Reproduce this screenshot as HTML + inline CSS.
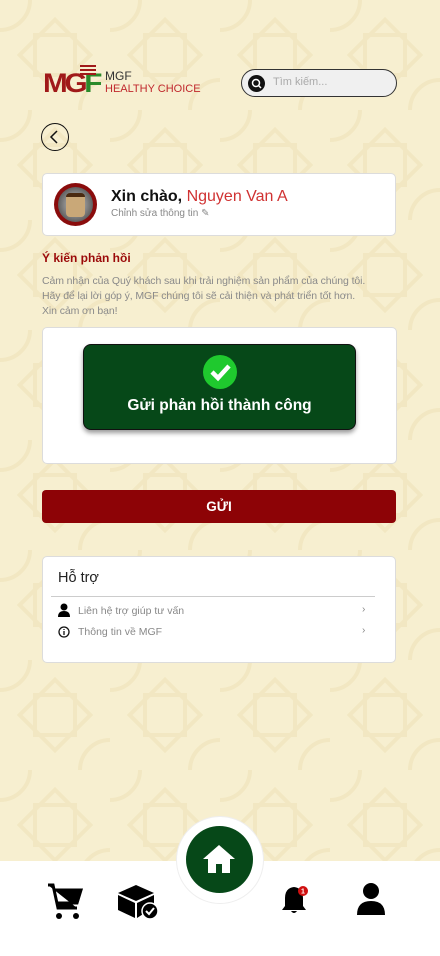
<!DOCTYPE html>
<html><head><meta charset="utf-8"><style>
*{margin:0;padding:0;box-sizing:border-box}
body{width:440px;height:956px;position:relative;overflow:hidden;font-family:"Liberation Sans","Noto Sans CJK SC",sans-serif;background:#f7efd0}
.a{position:absolute}
.card{position:absolute;background:#fff;border:1px solid #dcdcdc;border-radius:5px}
</style></head><body>
<svg class="a" style="left:0;top:0" width="440" height="861"><defs><pattern id="p" width="110" height="110" patternUnits="userSpaceOnUse"><g fill="none" stroke="#f2e7c2" stroke-width="4"><rect x="30" y="30" width="50" height="50" transform="rotate(45 55 55)"/><rect x="35" y="35" width="40" height="40"/><circle cx="0" cy="0" r="30"/><circle cx="110" cy="110" r="30"/></g></pattern></defs><rect width="440" height="861" fill="url(#p)"/></svg>

<!-- logo -->
<div class="a" style="left:43px;top:70px;font-weight:bold;font-size:27px;color:#a01919;letter-spacing:-3px;line-height:27px;transform:scaleX(1.1);transform-origin:left">MG<span style="color:#2a8a2a">F</span></div>
<div class="a" style="left:80px;top:65px;width:16px;height:2px;background:#a01919;box-shadow:0 4px 0 #a01919,0 8px 0 #a01919"></div>
<div class="a" style="left:105px;top:69px;font-size:12px;color:#333">MGF</div>
<div class="a" style="left:105px;top:83px;font-size:11px;color:#c0282d">HEALTHY CHOICE</div>

<!-- search -->
<div class="a" style="left:241px;top:69px;width:156px;height:28px;border:1.5px solid #333;border-radius:14px;background:#f0f0f0"></div>
<div class="a" style="left:248px;top:75px;width:17px;height:17px;border-radius:50%;background:#111"></div>
<svg class="a" style="left:250px;top:77px" width="13" height="13"><circle cx="6" cy="6" r="3.5" fill="none" stroke="#fff" stroke-width="1.5"/><path d="M8.5 8.5L11 11" stroke="#fff" stroke-width="1.5"/></svg>
<div class="a" style="left:273px;top:76px;font-size:11px;color:#aaa">Tìm kiếm...</div>

<!-- back -->
<div class="a" style="left:41px;top:123px;width:28px;height:28px;border:1.5px solid #111;border-radius:50%"></div>
<svg class="a" style="left:41px;top:123px" width="28" height="28"><path d="M16 8L10 14L16 20" fill="none" stroke="#111" stroke-width="1.5"/></svg>

<!-- profile -->
<div class="card" style="left:42px;top:173px;width:354px;height:63px"></div>
<div class="a" style="left:54px;top:183px;width:43px;height:43px;border-radius:50%;background:#8a0c0c"></div>
<div class="a" style="left:58px;top:187px;width:35px;height:35px;border-radius:50%;background:radial-gradient(#ccc,#333)"></div>
<div class="a" style="left:66px;top:193px;width:19px;height:24px;border-radius:4px;background:#c9a878;border-top:4px solid #4a2a10"></div>
<div class="a" style="left:111px;top:188px;font-size:16px;color:#111"><b>Xin chào,</b> <span style="color:#d03232">Nguyen Van A</span></div>
<div class="a" style="left:111px;top:208px;font-size:10px;color:#888">Chỉnh sửa thông tin ✎</div>

<div class="a" style="left:42px;top:251px;font-size:12px;font-weight:bold;color:#9b0a0a">Ý kiến phản hồi</div>
<div class="a" style="left:42px;top:274px;font-size:10.5px;color:#8a8a8a;line-height:15px;white-space:nowrap;letter-spacing:-0.1px">Cảm nhận của Quý khách sau khi trải nghiệm sản phẩm của chúng tôi.<br>Hãy để lại lời góp ý, MGF chúng tôi sẽ cải thiện và phát triển tốt hơn.<br>Xin cảm ơn bạn!</div>

<div class="card" style="left:42px;top:327px;width:355px;height:137px"></div>
<div class="a" style="left:83px;top:344px;width:273px;height:86px;background:#064818;border:1px solid #111;border-radius:8px;box-shadow:0 3px 5px rgba(0,0,0,.4)"></div>
<div class="a" style="left:203px;top:355px;width:34px;height:34px;border-radius:50%;background:#1fc92e"></div>
<svg class="a" style="left:203px;top:355px" width="34" height="34"><path d="M9 17L15 23L26 11" fill="none" stroke="#fff" stroke-width="4.5"/></svg>
<div class="a" style="left:83px;top:397px;width:273px;text-align:center;font-size:15.5px;font-weight:bold;color:#fff">Gửi phản hồi thành công</div>

<div class="a" style="left:42px;top:490px;width:354px;height:33px;background:#8d0306;border-radius:4px;color:#fff;font-weight:bold;font-size:13.5px;text-align:center;line-height:33px">GỬI</div>

<div class="card" style="left:42px;top:556px;width:354px;height:107px"></div>
<div class="a" style="left:58px;top:570px;font-size:14.5px;color:#222">Hỗ trợ</div>
<div class="a" style="left:51px;top:596px;width:324px;height:1px;background:#ccc"></div>
<svg class="a" style="left:58px;top:603px" width="12" height="14"><circle cx="6" cy="4" r="3.5"/><path d="M0 14Q0 8 6 8Q12 8 12 14Z"/></svg>
<div class="a" style="left:78px;top:605px;font-size:10.5px;color:#888">Liên hệ trợ giúp tư vấn</div>
<div class="a" style="left:362px;top:604px;font-size:10px;color:#888">›</div>
<svg class="a" style="left:58px;top:626px" width="12" height="12"><circle cx="6" cy="6" r="5" fill="none" stroke="#111" stroke-width="1.3"/><path d="M6 5V9M6 3V4" stroke="#111" stroke-width="1.3"/></svg>
<div class="a" style="left:78px;top:626px;font-size:10.5px;color:#888">Thông tin về MGF</div>
<div class="a" style="left:362px;top:625px;font-size:10px;color:#888">›</div>

<!-- bottom nav -->
<div class="a" style="left:0;top:861px;width:440px;height:95px;background:#fff"></div>
<div class="a" style="left:176px;top:816px;width:88px;height:88px;border-radius:50%;background:#fff;border:1px solid #eee"></div>
<div class="a" style="left:186px;top:826px;width:67px;height:67px;border-radius:50%;background:#064818"></div>
<svg class="a" style="left:202px;top:843px" width="34" height="32"><path d="M17 2L1 16H6V30H14V21H20V30H28V16H33Z" fill="#fff"/></svg>
<svg class="a" style="left:47px;top:882px" width="36" height="38"><path d="M1 3H6L11 26H30M8 8H34L30 21H11" fill="#000" stroke="#000" stroke-width="3"/><circle cx="12" cy="34" r="3"/><circle cx="29" cy="34" r="3"/></svg>
<svg class="a" style="left:116px;top:881px" width="44" height="40"><path d="M2 12L20 4L38 12L20 20Z M2 14L19 22V37L2 29Z M21 22L38 14V26L21 37Z" fill="#000"/><circle cx="34" cy="30" r="8" fill="#000" stroke="#fff" stroke-width="1.5"/><path d="M30 30L33 33L38 27" fill="none" stroke="#fff" stroke-width="2"/></svg>
<svg class="a" style="left:282px;top:883px" width="28" height="32"><path d="M12 4Q3 5 3 15V23L0 27H24L21 23V15Q21 5 12 4Z M9 28Q12 32 15 28Z" fill="#000"/><circle cx="21" cy="8" r="5" fill="#d01010"/><text x="21" y="10.5" font-size="7" fill="#fff" text-anchor="middle" font-family="Liberation Sans" font-weight="bold">1</text></svg>
<svg class="a" style="left:356px;top:882px" width="30" height="34"><circle cx="15" cy="9" r="8"/><path d="M1 33Q1 19 15 19Q29 19 29 33Z"/></svg>
</body></html>
